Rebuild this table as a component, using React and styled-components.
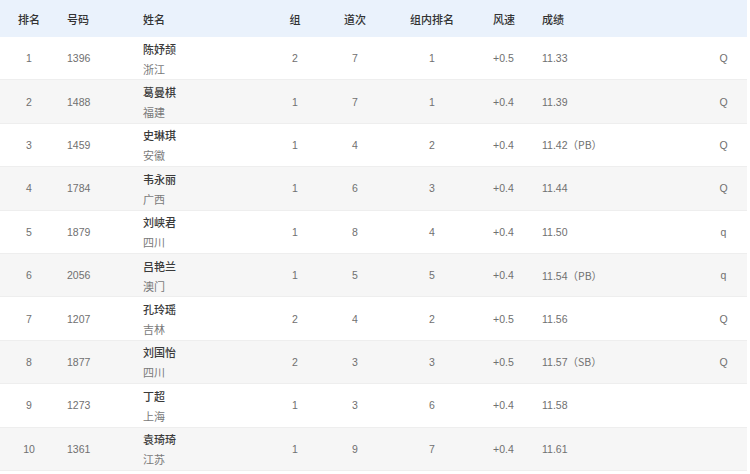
import React from "react";
import styled, { createGlobalStyle } from "styled-components";

const Global = createGlobalStyle`
  html, body { margin: 0; padding: 0; background: #fff; }
  body { font-family: "Liberation Sans", "Noto Sans CJK SC", sans-serif; }
`;

const COLS = "58px 76px 126px 70px 50px 104px 49px 167px 47px";

const Table = styled.div`
  width: 747px;
  display: flex;
  flex-direction: column;
`;

const HeadRow = styled.div`
  display: grid;
  grid-template-columns: ${COLS};
  height: 37px;
  align-items: center;
  background: #eaf2fc;
`;

const Row = styled.div`
  display: grid;
  grid-template-columns: ${COLS};
  height: 43.4px;
  align-items: center;
  background: ${(p) => (p.$striped ? "#f6f6f6" : "#fff")};
  border-bottom: 1px solid #eeeeee;
  box-sizing: border-box;
`;

const HeadCell = styled.div`
  font-family: "Noto Sans CJK SC", sans-serif;
  font-size: 11px;
  font-weight: 500;
  color: #333;
  text-align: ${(p) => p.$align || "left"};
  padding-left: ${(p) => (p.$align === "center" ? "0" : "9px")};
`;

const Cell = styled.div`
  font-size: 10.5px;
  color: #707070;
  text-align: ${(p) => p.$align || "left"};
  padding-left: ${(p) => (p.$align === "center" ? "0" : "9px")};
  white-space: nowrap;
`;

const NameCell = styled.div`
  display: flex;
  flex-direction: column;
  gap: 6px;
  padding-left: 9px;
  padding-top: 1px;
  font-family: "Noto Sans CJK SC", sans-serif;
  font-size: 11px;
  line-height: 14px;
`;

const Name = styled.span`
  color: #3a3a3a;
  font-weight: 500;
`;

const Province = styled.span`
  color: #7a7a7a;
`;

const Note = styled.span`
  font-family: "Noto Sans CJK SC", "Liberation Sans", sans-serif;
`;

const rows = [
  ["1", "1396", "陈妤颉", "浙江", "2", "7", "1", "+0.5", "11.33", "", "Q"],
  ["2", "1488", "葛曼棋", "福建", "1", "7", "1", "+0.4", "11.39", "", "Q"],
  ["3", "1459", "史琳琪", "安徽", "1", "4", "2", "+0.4", "11.42", "PB", "Q"],
  ["4", "1784", "韦永丽", "广西", "1", "6", "3", "+0.4", "11.44", "", "Q"],
  ["5", "1879", "刘峡君", "四川", "1", "8", "4", "+0.4", "11.50", "", "q"],
  ["6", "2056", "吕艳兰", "澳门", "1", "5", "5", "+0.4", "11.54", "PB", "q"],
  ["7", "1207", "孔玲瑶", "吉林", "2", "4", "2", "+0.5", "11.56", "", "Q"],
  ["8", "1877", "刘国怡", "四川", "2", "3", "3", "+0.5", "11.57", "SB", "Q"],
  ["9", "1273", "丁超", "上海", "1", "3", "6", "+0.4", "11.58", "", ""],
  ["10", "1361", "袁琦琦", "江苏", "1", "9", "7", "+0.4", "11.61", "", ""],
];

export default function App() {
  return (
    <>
      <Global />
      <Table>
        <HeadRow>
          <HeadCell $align="center">排名</HeadCell>
          <HeadCell>号码</HeadCell>
          <HeadCell>姓名</HeadCell>
          <HeadCell $align="center">组</HeadCell>
          <HeadCell $align="center">道次</HeadCell>
          <HeadCell $align="center">组内排名</HeadCell>
          <HeadCell>风速</HeadCell>
          <HeadCell>成绩</HeadCell>
          <HeadCell $align="center"></HeadCell>
        </HeadRow>
        {rows.map((r, i) => (
          <Row key={r[0]} $striped={i % 2 === 1}>
            <Cell $align="center">{r[0]}</Cell>
            <Cell>{r[1]}</Cell>
            <NameCell>
              <Name>{r[2]}</Name>
              <Province>{r[3]}</Province>
            </NameCell>
            <Cell $align="center">{r[4]}</Cell>
            <Cell $align="center">{r[5]}</Cell>
            <Cell $align="center">{r[6]}</Cell>
            <Cell>{r[7]}</Cell>
            <Cell>
              {r[8]}
              {r[9] && <Note>（{r[9]}）</Note>}
            </Cell>
            <Cell $align="center">{r[10]}</Cell>
          </Row>
        ))}
      </Table>
    </>
  );
}
